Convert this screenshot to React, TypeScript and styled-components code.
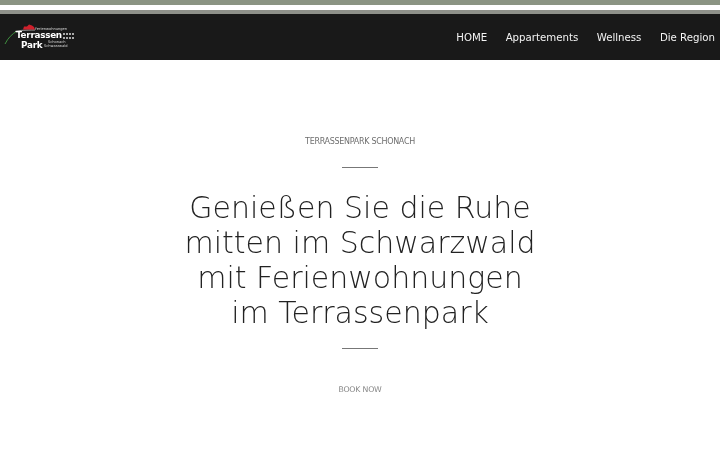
import { FC } from "react";
import styled, { createGlobalStyle } from "styled-components";

const GlobalStyle = createGlobalStyle`
  html, body {
    margin: 0;
    padding: 0;
    background: #fff;
    font-family: "DejaVu Sans", sans-serif;
    overflow: hidden;
  }
`;

const Page = styled.div`
  width: 720px;
  height: 450px;
  display: flex;
  flex-direction: column;
`;

const TopStripe = styled.div`
  height: 5px;
  background: #8b9483;
`;

const WhiteGap = styled.div`
  height: 5px;
  background: #fff;
`;

const Header = styled.header`
  height: 46px;
  border-top: 4px solid #8f918a;
  background: #191919;
  display: flex;
  align-items: center;
  justify-content: space-between;
  will-change: transform;
`;

const LogoWrap = styled.div`
  width: 76px;
  height: 28px;
  margin-left: 4px;
  position: relative;
  color: #fff;
`;

const LogoArt = styled.svg`
  position: absolute;
  left: 0;
  top: 0;
`;

const LogoLarge = styled.span<{ $left: number; $top: number }>`
  position: absolute;
  left: ${(p) => p.$left}px;
  top: ${(p) => p.$top}px;
  font-size: 8.8px;
  line-height: 10px;
  font-weight: 700;
  letter-spacing: -0.25px;
  white-space: nowrap;
`;

const LogoSmall = styled.span<{ $left: number; $top: number }>`
  position: absolute;
  left: ${(p) => p.$left}px;
  top: ${(p) => p.$top}px;
  font-size: 3.6px;
  line-height: 4px;
  color: #d8d8d8;
  white-space: nowrap;
`;

const LogoWindows = styled.span`
  position: absolute;
  left: 59px;
  top: 10px;
  width: 11px;
  height: 6px;
  background:
    repeating-linear-gradient(90deg, #aaa 0 2px, transparent 2px 3px) 0 0 / 100% 2px no-repeat,
    repeating-linear-gradient(90deg, #aaa 0 2px, transparent 2px 3px) 0 4px / 100% 2px no-repeat;
`;

const Nav = styled.nav`
  display: flex;
  align-items: center;
  gap: 18.5px;
  padding: 2px 5px 0 0;
`;

const NavLink = styled.a`
  color: #f4f4f4;
  font-size: 10.2px;
  line-height: 16px;
  white-space: nowrap;
`;

const Hero = styled.main`
  flex: 1;
  display: flex;
  flex-direction: column;
  align-items: center;
  padding-top: 76px;
  will-change: transform;
`;

const Kicker = styled.div`
  font-size: 8px;
  line-height: 12px;
  letter-spacing: -0.3px;
  color: #6f6f6f;
`;

const Rule = styled.div<{ $top: number }>`
  width: 36px;
  height: 1px;
  background: #777;
  margin-top: ${(p) => p.$top}px;
`;

const Title = styled.h1`
  margin: 22px 0 0;
  font-size: 30px;
  line-height: 35px;
  font-weight: 200;
  color: #222;
  text-align: center;
`;

const BookNow = styled.a`
  margin-top: 35px;
  font-size: 7.8px;
  line-height: 12px;
  letter-spacing: -0.2px;
  color: #888;
`;

const Logo: FC = () => (
  <LogoWrap>
    <LogoArt width="76" height="28" viewBox="0 0 76 28">
      <path d="M1 21 C4 15 8 11 13 8" fill="none" stroke="#3f8f3f" strokeWidth="1" />
      <path d="M11 8.5 C16 7.2 22 7 31 7" fill="none" stroke="#e8e8e8" strokeWidth="0.7" />
      <path d="M19 6.5 L20 3.5 L23 3.5 L25 1.5 L28 2.5 L30 4 L31 6.5 Z" fill="#d0202c" />
    </LogoArt>
    <LogoSmall $left={31} $top={4}>Ferienwohnungen</LogoSmall>
    <LogoLarge $left={12} $top={7}>Terrassen</LogoLarge>
    <LogoLarge $left={17} $top={17}>Park</LogoLarge>
    <LogoSmall $left={44} $top={17}>Schonach</LogoSmall>
    <LogoSmall $left={40} $top={21}>Schwarzwald</LogoSmall>
    <LogoWindows />
  </LogoWrap>
);

export default function App() {
  return (
    <Page>
      <GlobalStyle />
      <TopStripe />
      <WhiteGap />
      <Header>
        <Logo />
        <Nav>
          <NavLink>HOME</NavLink>
          <NavLink>Appartements</NavLink>
          <NavLink>Wellness</NavLink>
          <NavLink>Die Region</NavLink>
        </Nav>
      </Header>
      <Hero>
        <Kicker>TERRASSENPARK SCHONACH</Kicker>
        <Rule $top={19} />
        <Title>
          Genießen Sie die Ruhe
          <br />
          mitten im Schwarzwald
          <br />
          mit Ferienwohnungen
          <br />
          im Terrassenpark
        </Title>
        <Rule $top={18} />
        <BookNow>BOOK NOW</BookNow>
      </Hero>
    </Page>
  );
}
